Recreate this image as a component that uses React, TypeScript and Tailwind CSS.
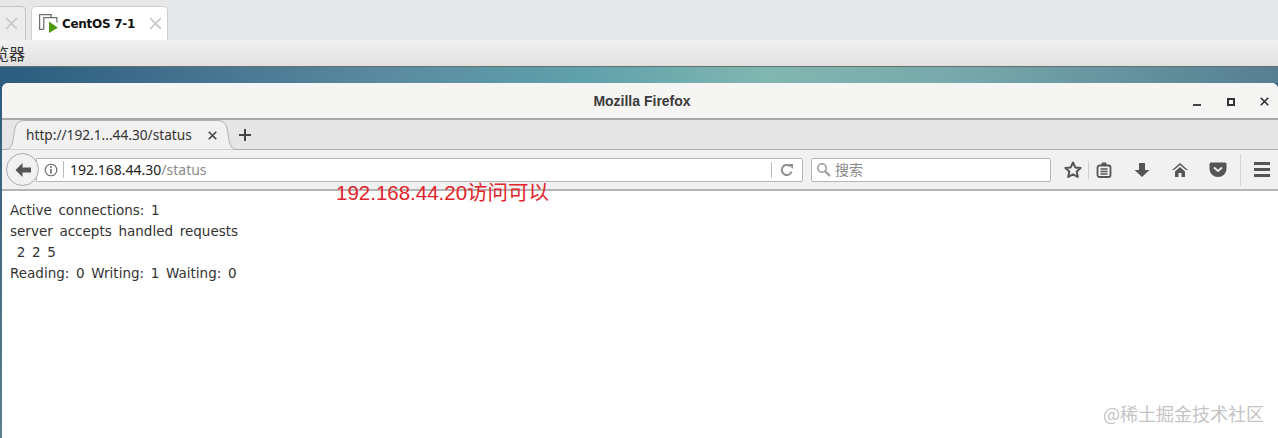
import React from "react";

const ui = { fontFamily: '"Noto Sans","Noto Sans CJK SC",sans-serif' };

function Logo() {
  return (
    <svg width="21" height="21" viewBox="0 0 20 20" fill="none" className="shrink-0">
      <path d="M5.5 15.5H1.5V1.5H12.5V4" stroke="#6f6f6f" strokeWidth="1.2" />
      <path d="M5.5 15.5V4.5H18V9" stroke="#6f6f6f" strokeWidth="1.2" />
      <path d="M10.5 8V19L19 14Z" fill="#4e9a12" />
    </svg>
  );
}

function X({ size = 12, color = "#c8c8c8", w = 1.5 }: { size?: number; color?: string; w?: number }) {
  return (
    <svg width={size} height={size} viewBox="0 0 12 12" className="shrink-0">
      <path d="M1 1L11 11M11 1L1 11" stroke={color} strokeWidth={w} />
    </svg>
  );
}

function Toolbar() {
  const c = "#555";
  return (
    <div className="flex items-center h-full">
      <svg width="20" height="20" viewBox="0 0 20 20" className="ml-[12px]">
        <path d="M10 2.5L12.3 7.4L17.6 8L13.7 11.6L14.8 17L10 14.3L5.2 17L6.3 11.6L2.4 8L7.7 7.4Z" fill="none" stroke={c} strokeWidth="2" strokeLinejoin="round" />
      </svg>
      <div className="w-px h-[18px] bg-[#cfcfcf] ml-[5px]" />
      <svg width="16" height="18" viewBox="0 0 16 18" className="ml-[7px]">
        <rect x="1.5" y="4.5" width="13" height="11.5" rx="2" fill="none" stroke={c} strokeWidth="1.8" />
        <path d="M6 4V2H10V4Z" fill={c} stroke={c} strokeWidth="1" />
        <path d="M4.5 8H11.5M4.5 10.5H11.5M4.5 13H11.5" stroke={c} strokeWidth="1.4" />
      </svg>
      <svg width="16" height="16" viewBox="0 0 16 16" className="ml-[22px]">
        <path d="M5 1H11V8H15.5L8 15L0.5 8H5Z" fill={c} />
      </svg>
      <svg width="18" height="16" viewBox="0 0 18 16" className="ml-[21px]">
        <path d="M9 1L1 8H3L9 3L15 8H17Z" fill={c} />
        <path d="M9 5L4 9.5V15H7.5V11H10.5V15H14V9.5Z" fill={c} />
      </svg>
      <svg width="18" height="15" viewBox="0 0 18 15" className="ml-[20px]">
        <path d="M2 0.5H16A1.5 1.5 0 0 1 17.5 2V7A8.5 8 0 0 1 0.5 7V2A1.5 1.5 0 0 1 2 0.5Z" fill={c} />
        <path d="M5 5.5L9 9L13 5.5" fill="none" stroke="#eee" strokeWidth="2" />
      </svg>
      <div className="w-px h-[32px] bg-[#d4d4d4] ml-[13px]" />
      <div className="ml-[13px] flex flex-col gap-[3px]">
        <div className="w-[16px] h-[3px] bg-[#555]" />
        <div className="w-[16px] h-[3px] bg-[#555]" />
        <div className="w-[16px] h-[3px] bg-[#555]" />
      </div>
    </div>
  );
}

export default function App() {
  return (
    <div className="w-[1278px] h-[438px] overflow-hidden relative bg-white" style={ui}>
      {/* VMware tabs */}
      <div className="h-[40px] bg-[#e7e8e9] flex items-end">
        <div className="w-[26px] h-[34px] bg-[#ececec] border-r border-t border-[#c4c4c4] rounded-tr-[5px] flex items-center justify-end pr-[7px] box-border">
          <X size={13} />
        </div>
        <div className="ml-[5px] w-[137px] h-[34px] bg-white border-r border-t border-l border-[#d0d0d0] rounded-t-[5px] flex items-center pl-[6px] box-border">
          <Logo />
          <span className="ml-[3px] text-[12px] font-bold text-[#111] whitespace-nowrap" style={{ fontFamily: '"DejaVu Sans",sans-serif', letterSpacing: "-0.3px" }}>CentOS 7-1</span>
          <span className="ml-[14px]"><X size={13} /></span>
        </div>
      </div>
      {/* VMware menu */}
      <div className="h-[27px] bg-gradient-to-b from-[#f1f1f1] to-[#e1e1e1] overflow-hidden flex items-center border-b border-[#66716a] box-border">
        <span className="text-[16px] text-[#333] -ml-[7px] leading-none" style={{ fontFamily: '"Noto Sans CJK SC",sans-serif' }}>览器</span>
      </div>
      {/* Desktop strip + Window */}
      <div className="h-[371px] bg-gradient-to-b from-[#2c5a7c] to-[#5b7f8c]">
        <div className="h-[16px] bg-[linear-gradient(90deg,#2c5c7e_0%,#5a8aa0_30%,#5fa0ab_45%,#80b6b0_60%,#78a8ab_75%,#557f92_100%)]" />
        <div className="ml-[2px] h-[355px] bg-white rounded-t-[6px] overflow-hidden flex flex-col">
          <div className="h-[37px] shrink-0 bg-[#f5f5f4] border-b-2 border-[#a9a9a9] box-border flex items-center relative">
            <div className="flex-1 text-center text-[14px] font-bold text-[#3a3a3a] pl-[4px] pt-px" style={{ fontFamily: '"Liberation Sans",sans-serif' }}>Mozilla Firefox</div>
            <div className="absolute right-[9px] top-[14px] flex items-center">
              <div className="w-[8px] h-[2px] bg-[#444] mt-[7px] mr-[26px]" />
              <div className="w-[8px] h-[8px] border-2 border-[#333] mr-[25px]" />
              <X size={9} color="#333" w={2.2} />
            </div>
          </div>
          <div className="h-[30px] shrink-0 bg-[#e6e6e6] border-b border-[#b0b0b0] box-border flex items-end">
            <div className="ml-[3px] w-[232px] h-[30px] -mb-px flex items-center pl-[21px] pt-px box-border relative">
              <svg width="232" height="30" viewBox="0 0 232 30" className="absolute left-0 top-0">
                <path d="M0 29.5C6 29.5 7.5 25 9 14C10 5 12 0.5 20 0.5H212C220 0.5 222 5 223 14C224.5 25 226 29.5 232 29.5Z" fill="#f1f1f1" />
                <path d="M0 29.5C6 29.5 7.5 25 9 14C10 5 12 0.5 20 0.5H212C220 0.5 222 5 223 14C224.5 25 226 29.5 232 29.5" fill="none" stroke="#b0b0b0" />
              </svg>
              <span className="relative text-[13.7px] text-[#333] whitespace-nowrap">http://192.1...44.30/status</span>
              <span className="absolute left-[203px] top-[11px]"><X size={9} color="#444" w={2.2} /></span>
            </div>
            <svg width="14" height="14" viewBox="0 0 14 14" className="ml-[1px] mb-[7px]">
              <path d="M7 1V13M1 7H13" stroke="#444" strokeWidth="2" />
            </svg>
          </div>
          <div className="h-[41px] shrink-0 bg-[#f1f1f1] border-b-2 border-[#b5b5b5] box-border flex items-center">
            <div className="ml-[4px] w-[33px] h-[33px] rounded-full bg-[#f1f1f1] border border-[#a9a9a9] flex items-center justify-center box-border z-10 shrink-0">
              <svg width="18" height="16" viewBox="0 0 18 16">
                <path d="M8.5 1L1.5 8L8.5 15V10.5H17V5.5H8.5Z" fill="#555" />
              </svg>
            </div>
            <div className="-ml-[3px] w-[767px] h-[24px] bg-white border border-[#b5b5b5] rounded-r-[2px] flex items-center box-border shrink-0">
              <svg width="14" height="14" viewBox="0 0 14 14" className="ml-[7px]">
                <circle cx="7" cy="7" r="5.8" fill="none" stroke="#666" strokeWidth="1.1" />
                <path d="M7 6V10.5" stroke="#666" strokeWidth="1.6" />
                <circle cx="7" cy="4" r="1" fill="#666" />
              </svg>
              <div className="w-px h-[17px] bg-[#bbb] ml-[5px]" />
              <span className="ml-[5px] pl-px text-[14px] text-[#222] whitespace-nowrap">192.168.44.30<span className="text-[#8a8a8a]">/status</span></span>
              <div className="ml-auto w-px h-[16px] bg-[#bbb]" />
              <svg width="14" height="14" viewBox="0 0 14 14" className="mx-[8px]">
                <path d="M11.5 8.5A5 5 0 1 1 10 3.2" fill="none" stroke="#8f8f8f" strokeWidth="2" />
                <path d="M8 1H13V6Z" fill="#8f8f8f" />
              </svg>
            </div>
            <div className="ml-[8px] w-[240px] h-[24px] bg-white border border-[#b5b5b5] rounded-[2px] flex items-center box-border shrink-0">
              <svg width="15" height="15" viewBox="0 0 15 15" className="ml-[4px]">
                <circle cx="6" cy="6" r="4.2" fill="none" stroke="#9a9a9a" strokeWidth="1.6" />
                <path d="M9 9L14 14" stroke="#9a9a9a" strokeWidth="2.2" />
              </svg>
              <span className="ml-[4px] text-[14px] text-[#8a8a8a]" style={{ fontFamily: '"Noto Sans CJK SC",sans-serif' }}>搜索</span>
            </div>
            <Toolbar />
          </div>
          <pre className="pt-[9px] pl-[8px] text-[13.5px] leading-[21px] text-[#333] m-0" style={{ fontFamily: '"DejaVu Sans",sans-serif', wordSpacing: "2.4px" }}>
{`Active connections: 1
server accepts handled requests
 2 2 5
Reading: 0 Writing: 1 Waiting: 0`}
          </pre>
        </div>
      </div>
      {/* Annotation over the page */}
      <div className="absolute left-[336px] top-[181px] text-[20.5px] leading-[24px] text-[#e0242c] whitespace-nowrap" style={{ fontFamily: '"Liberation Sans","Noto Sans CJK SC",sans-serif' }}>192.168.44.20访问可以</div>
      {/* Watermark */}
      <div className="absolute right-[14px] top-[402px] text-[18px] leading-[22px] text-[#c4c4c4] whitespace-nowrap" style={{ fontFamily: '"Noto Sans CJK SC",sans-serif' }}>@稀土掘金技术社区</div>
    </div>
  );
}
